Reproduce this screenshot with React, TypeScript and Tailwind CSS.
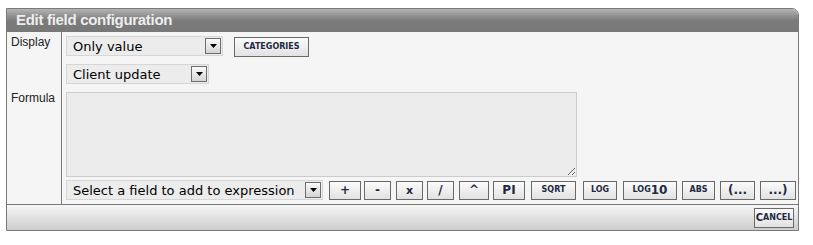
import type { ReactNode } from 'react';

const verdana = { fontFamily: '"DejaVu Sans", Verdana, sans-serif' };
const tahoma = { fontFamily: '"Liberation Sans", Tahoma, Arial, sans-serif' };

function FakeSelect({ label, width }: { label: string; width: string }) {
  return (
    <div className={`flex items-center h-[20px] ${width} bg-[#ececec] border border-[#d6d6d6]`}>
      <span className="flex-1 pl-[6px] text-[13px] leading-none text-black whitespace-nowrap" style={verdana}>
        {label}
      </span>
      <span className="flex items-center justify-center w-[16px] h-[16px] mr-px border border-[#6d6d6d] bg-gradient-to-b from-[#fafafa] to-[#d4d4d4]">
        <svg width="7" height="4" viewBox="0 0 7 4">
          <path d="M0 0h7L3.5 4z" fill="#000" />
        </svg>
      </span>
    </div>
  );
}

function Btn({ children, width, className = '' }: { children: ReactNode; width: string; className?: string }) {
  return (
    <button
      className={`shrink-0 flex items-center justify-center h-[19px] ${width} border border-[#6a6a6a] bg-gradient-to-b from-[#fbfbfb] to-[#e2e2e2] text-[#1e2a44] font-bold leading-none ${className}`}
      style={verdana}
    >
      {children}
    </button>
  );
}

export default function App() {
  return (
    <div className="pl-[6px] pt-[8px] bg-white h-[245px]">
      <div className="w-[793px] border border-[#7a7a7a] rounded-tr-[7px] overflow-hidden bg-[#f5f5f5]">
        <div className="h-[23px] bg-gradient-to-b from-[#b4b4b4] via-[#7b7b7b] to-[#787878] flex items-center pl-[9px]">
          <span className="text-[15px] font-bold text-[#eeeeee] tracking-[-0.3px]" style={tahoma}>
            Edit field configuration
          </span>
        </div>

        <div className="grid grid-cols-[55px_1fr] border-b border-[#7a7a7a]">
          <div className="border-r border-[#7a7a7a] pl-[4px] pt-[1px] text-[12px] text-[#222]" style={tahoma}>
            Display
          </div>
          <div className="pl-[4px] pt-[4px] flex flex-col gap-[7px]">
            <div className="flex items-start">
              <FakeSelect label="Only value" width="w-[157px]" />
              <Btn width="w-[75px]" className="h-[20px] text-[8px] ml-[11px] mt-px">CATEGORIES</Btn>
            </div>
            <FakeSelect label="Client update" width="w-[143px]" />
          </div>

          <div className="border-r border-[#7a7a7a] pl-[4px] pt-[5px] text-[12px] text-[#222]" style={tahoma}>
            Formula
          </div>
          <div className="pl-[4px] pt-[8px] pb-[4px]">
            <textarea className="block w-[511px] h-[85px] bg-[#ececec] border border-[#cccccc] outline-none" />
            <div className="flex items-center mt-[3px]">
              <FakeSelect label="Select a field to add to expression" width="w-[257px]" />
              <Btn width="w-[32px]" className="text-[12px] ml-[6px]">+</Btn>
              <Btn width="w-[27px]" className="text-[12px] ml-[3px]">-</Btn>
              <Btn width="w-[27px]" className="text-[11px] ml-[5px]">x</Btn>
              <Btn width="w-[27px]" className="text-[12px] ml-[4px]">/</Btn>
              <Btn width="w-[30px]" className="text-[12px] ml-[5px]">^</Btn>
              <Btn width="w-[32px]" className="text-[12px] ml-[4px]">PI</Btn>
              <Btn width="w-[45px]" className="text-[8px] ml-[6px]">SQRT</Btn>
              <Btn width="w-[34px]" className="text-[8px] ml-[7px]">LOG</Btn>
              <Btn width="w-[54px]" className="text-[8px] ml-[6px]">
                LOG<span className="text-[12px]">10</span>
              </Btn>
              <Btn width="w-[33px]" className="text-[8px] ml-[5px]">ABS</Btn>
              <Btn width="w-[35px]" className="text-[12px] ml-[5px]">(...</Btn>
              <Btn width="w-[36px]" className="text-[12px] ml-[5px]">...)</Btn>
            </div>
          </div>
        </div>

        <div className="h-[25px] bg-gradient-to-b from-[#f6f6f6] to-[#cdcdcd] flex items-center justify-end pr-[4px]">
          <Btn width="w-[40px]" className="h-[20px] text-[10px]">
            C<span className="text-[8px]">ANCEL</span>
          </Btn>
        </div>
      </div>
    </div>
  );
}
